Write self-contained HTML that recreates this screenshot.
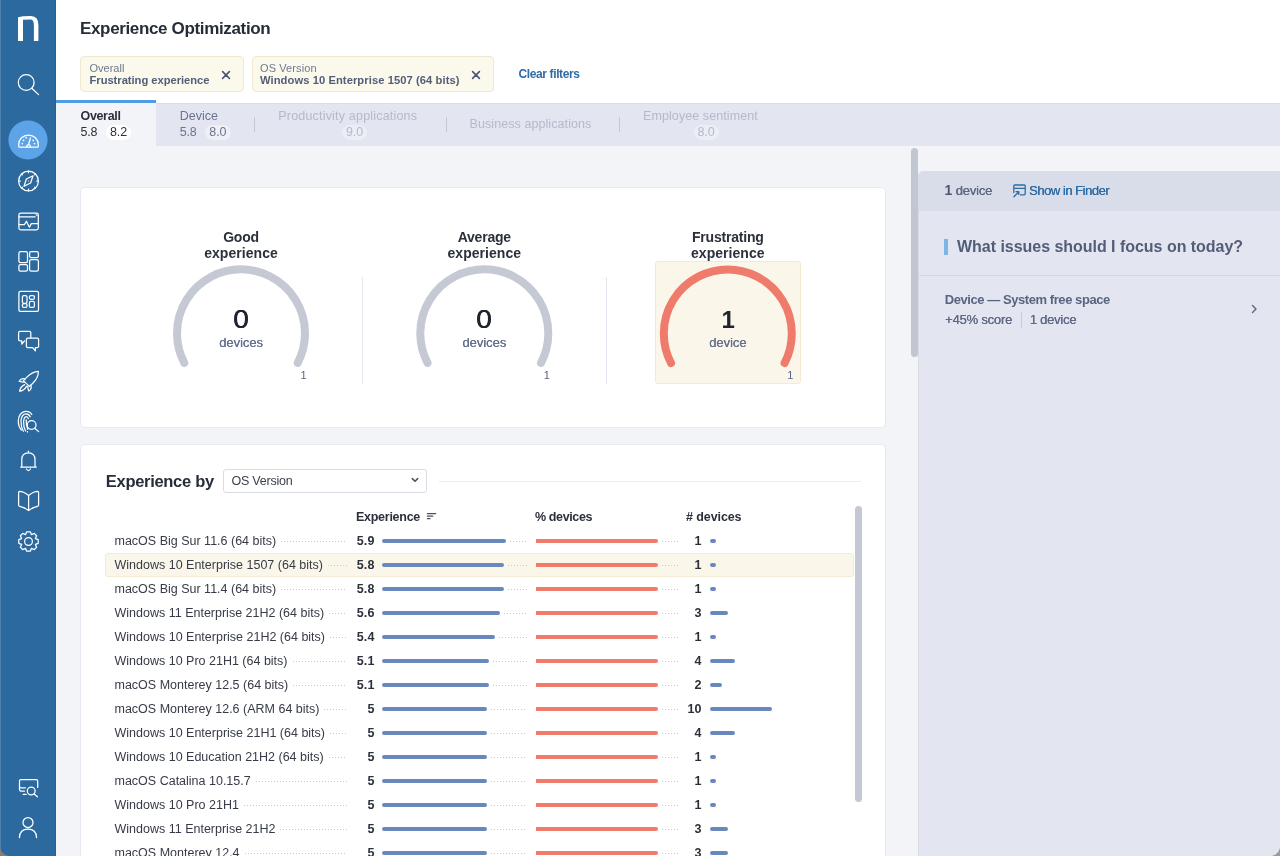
<!DOCTYPE html>
<html><head><meta charset="utf-8">
<style>
*{box-sizing:border-box;margin:0;padding:0}
html,body{width:1280px;height:856px;overflow:hidden}
body{will-change:transform;font-family:"Liberation Sans",sans-serif;background:#F3F4F8;position:relative;color:#2B303B}
.abs{position:absolute}
.t{position:absolute;line-height:1;white-space:nowrap}
#side{left:0;top:0;width:56px;height:856px;background:#2C699F}
#hdr{left:56px;top:0;width:1224px;height:103px;background:#fff}
.chip{position:absolute;top:56px;height:36px;background:#FBF8EC;border:1px solid #F2E8CF;border-radius:4px}
#tabs{left:56px;top:103px;width:1224px;height:43px;background:#E3E5F0;border-top:1px solid #D9DCE8}
#acttab{left:56px;top:100px;width:100px;height:46px;background:#F3F4F8;border-top:3px solid #4E9BE6}
.pill{position:absolute;height:15px;border-radius:8px}
.vsep{position:absolute;width:1px}
.card{position:absolute;background:#fff;border:1px solid #E7E9F2;border-radius:5px}
.bar{position:absolute;height:4px;border-radius:2px}
.dots{position:absolute;height:1px;background-image:linear-gradient(to right,#C5C8D2 1px,transparent 1px);background-size:3px 1px}
</style></head>
<body>
<div id="side" class="abs"><svg width="56" height="856" viewBox="0 0 56 856" style="position:absolute;left:0;top:0" fill="none" stroke="#fff" stroke-width="1.25" stroke-linecap="round" stroke-linejoin="round">
<path d="M18 17.2 L23 16.2 L31 16 Q38.4 16.2 38.4 25 L38.4 41 L33.9 41 L33.9 25.5 Q33.9 19.6 30.5 19.6 L23 19.8 L23 41 L18 41 Z" fill="#fff" stroke="none"/>
<circle cx="26.2" cy="82.5" r="7.9"/>
<path d="M31.8 88.2 L38.6 94.6"/>
<circle cx="28" cy="140" r="19.6" fill="#5CA3E8" stroke="none"/>
<path d="M19.6 147.2 L37.4 147.2 Q38.3 147.2 38.3 146.2 L38.3 144.6 A9.8 9.6 0 0 0 18.7 144.6 L18.7 146.2 Q18.7 147.2 19.6 147.2 Z"/>
<path d="M26.6 147 L27.2 144.8 L29.8 144.8 L30.4 147 M28.5 144.8 L30.4 138"/>
<g fill="#fff" stroke="none"><circle cx="22.3" cy="143.6" r="0.9"/><circle cx="23.6" cy="140.3" r="0.9"/><circle cx="26.2" cy="137.8" r="0.9"/><circle cx="33.2" cy="140.3" r="0.9"/><circle cx="34.5" cy="143.6" r="0.9"/></g>
<circle cx="28.5" cy="181" r="9.9"/>
<path d="M28.5 171.2 V172.8 M28.5 189.2 V190.8 M18.7 181 H20.3 M36.7 181 H38.3 M21.6 174.1 L22.4 174.9 M35.4 174.1 L34.6 174.9 M21.6 187.9 L22.4 187.1 M35.4 187.9 L34.6 187.1"/>
<path d="M24 186.2 L26.4 179 L33 175.8 L30.6 183 Z"/>
<circle cx="28.5" cy="181" r="0.6" fill="#fff" stroke="none"/>
<rect x="18.9" y="213" width="19.4" height="16.8" rx="1.8"/>
<path d="M18.9 216.8 H35.2 M19 224.6 H24.4 L26.4 221.2 L29.4 227.2 L31.3 223.6 H38.2"/>
<path d="M36 214.6 L37.2 215.6" stroke-width="1.1"/>
<rect x="18.9" y="251.6" width="8.6" height="11" rx="1.6"/>
<rect x="18.9" y="264.6" width="8.6" height="6.4" rx="1.6"/>
<rect x="29.6" y="251.6" width="8.8" height="6" rx="1.6"/>
<rect x="29.6" y="259.6" width="8.8" height="11.4" rx="1.6"/>
<rect x="18.9" y="291.3" width="19.6" height="20" rx="1.4"/>
<rect x="22.4" y="295.5" width="4.6" height="7.8" rx="1.5"/>
<rect x="22.4" y="303.6" width="4.6" height="3.8" rx="1.5"/>
<rect x="29.4" y="295.5" width="5" height="3.8" rx="1.5"/>
<rect x="29.4" y="301.4" width="5" height="6" rx="1.5"/>
<path d="M30.8 337.8 V332.8 Q30.8 331.4 29.4 331.4 H20 Q18.6 331.4 18.6 332.8 V339.4 Q18.6 340.8 20 340.8 H21.8 L21.8 344.2 L24.6 340.8"/>
<path d="M27.8 338 H37.2 Q38.6 338 38.6 339.4 V346.2 Q38.6 347.6 37.2 347.6 H35.4 V350.9 L32.6 347.6 H27.8 Q26.4 347.6 26.4 346.2 V339.4 Q26.4 338 27.8 338 Z"/>
<path d="M38.4 371.4 Q31.8 371.8 26.6 377.4 L23.4 380.6 L26.4 383.6 L29.6 386.4 L32.8 383.2 Q38.2 378 38.4 371.4 Z"/>
<path d="M25.2 379 Q21.2 377.6 19.2 381.2 Q21.6 382.2 24 382.2 M30.8 385 Q32.2 389 28.8 391 Q27.8 388.6 27.8 386.2 M24.6 384.6 Q20 387 19.6 391.2 Q24 390.8 26.6 386.4"/>
<path d="M21.4 430 Q18.2 426.4 18.3 421 Q18.7 412.4 25.4 411.3 Q29.8 411 31.8 414.4 M23.4 431.2 Q20.9 427 21 421.4 Q21.3 414.4 25.8 413.9 Q28.9 413.8 30.2 416.8 M25.6 431 Q23.4 427 23.6 422 Q23.9 416.8 26.2 416.6 Q27.9 416.6 28.3 418.6 M26.2 419.8 Q26 424.6 27.8 429.4 M27.4 431.6 L27.6 432"/>
<circle cx="31.6" cy="425" r="4.4"/>
<path d="M34.8 428.2 L38.6 431.6"/>
<path d="M28.4 451 V452.8 M21.8 466.6 V459.8 Q21.8 452.8 28.4 452.8 Q35 452.8 35 459.8 V466.6 M20.6 467 H36.4 M26.4 469 Q28.4 472 30.4 469"/>
<path d="M28.6 495.4 Q23.8 491.6 19.6 491.4 Q18.6 491.4 18.6 492.6 V505 Q18.6 506.2 19.8 506.4 Q24.6 507.4 28.6 510.6 Q32.6 507.4 37.4 506.4 Q38.6 506.2 38.6 505 V492.6 Q38.6 491.4 37.6 491.4 Q33.4 491.6 28.6 495.4 Z M28.6 495.4 V510.4"/>
<circle cx="28.5" cy="541.5" r="3.9"/>
<path d="M26.7 531.8 L30.3 531.8 L31.4 534.6 L34.3 533.4 L36.6 535.7 L35.4 538.6 L38.2 539.7 L38.2 543.3 L35.4 544.4 L36.6 547.3 L34.3 549.6 L31.4 548.4 L30.3 551.2 L26.7 551.2 L25.6 548.4 L22.7 549.6 L20.4 547.3 L21.6 544.4 L18.8 543.3 L18.8 539.7 L21.6 538.6 L20.4 535.7 L22.7 533.4 L25.6 534.6 Z"/>
<path d="M22.8 787.8 H21 Q19.5 787.8 19.5 786.2 V781 Q19.5 779.5 21 779.5 H36.2 Q37.7 779.5 37.7 781 V787.4 M19.5 786.4 V789.6 Q19.5 791.2 21 791.2 H24.4 M21.8 787.8 H25.4 M23.2 794.3 H26.2"/>
<circle cx="31.2" cy="791" r="3.9"/>
<path d="M34 793.8 L37.4 796.8"/>
<circle cx="28" cy="822.5" r="5"/>
<path d="M19.4 837.6 Q19.8 829.2 28 829.2 Q36.2 829.2 36.6 837.6"/>
</svg></div>
<div id="hdr" class="abs"></div>
<div class="abs" style="left:55px;top:0;width:1px;height:856px;background:#22609A"></div>
<div class="abs" style="left:0;top:0;width:1px;height:856px;background:#4A7FAE"></div>
<div class="t" style="top:19.91px;font-size:17px;font-weight:700;color:#262C38;letter-spacing:-0.35px;left:80px;">Experience Optimization</div>

<div class="chip" style="left:80px;width:164px"></div>
<div class="chip" style="left:252px;width:242px"></div>
<div class="t" style="top:62.89px;font-size:11px;font-weight:400;color:#6F7890;left:89.5px;">Overall</div>

<div class="t" style="top:74.72px;font-size:11.2px;font-weight:700;color:#535D78;letter-spacing:-0.03px;left:89.5px;">Frustrating experience</div>

<div class="t" style="top:62.89px;font-size:11px;font-weight:400;color:#6F7890;letter-spacing:0.1px;left:260px;">OS Version</div>

<div class="t" style="top:74.72px;font-size:11.2px;font-weight:700;color:#535D78;letter-spacing:0.07px;left:260px;">Windows 10 Enterprise 1507 (64 bits)</div>

<svg class="abs" style="left:221px;top:70px" width="10" height="10" viewBox="0 0 10 10"><path d="M1.6 1.6 L8.4 8.4 M8.4 1.6 L1.6 8.4" stroke="#4C5674" stroke-width="1.6" stroke-linecap="round"/></svg>
<svg class="abs" style="left:471px;top:70px" width="10" height="10" viewBox="0 0 10 10"><path d="M1.6 1.6 L8.4 8.4 M8.4 1.6 L1.6 8.4" stroke="#4C5674" stroke-width="1.6" stroke-linecap="round"/></svg>
<div class="t" style="top:67.94px;font-size:12px;font-weight:700;color:#2F6CA4;letter-spacing:-0.38px;left:518.5px;">Clear filters</div>

<div id="tabs" class="abs"></div>
<div id="acttab" class="abs"></div>
<div class="t" style="top:110.42px;font-size:12.5px;font-weight:700;color:#2B303B;letter-spacing:-0.34px;left:80.5px;">Overall</div>

<div class="t" style="top:126.22px;font-size:12.5px;font-weight:400;color:#2B303B;letter-spacing:-0.2px;left:80.5px;">5.8</div>

<div class="pill" style="left:106px;top:124.5px;width:25px;background:#fff"></div>
<div class="t" style="top:126.22px;font-size:12.5px;font-weight:400;color:#2B303B;letter-spacing:-0.15px;left:-181.5px;width:600px;text-align:center;">8.2</div>

<div class="t" style="top:110.42px;font-size:12.5px;font-weight:400;color:#6B7493;left:179.7px;">Device</div>

<div class="t" style="top:126.22px;font-size:12.5px;font-weight:400;color:#6B7493;letter-spacing:-0.2px;left:179.7px;">5.8</div>

<div class="pill" style="left:205px;top:124.5px;width:25.5px;background:#EFF0F6"></div>
<div class="t" style="top:126.22px;font-size:12.5px;font-weight:400;color:#6B7493;letter-spacing:-0.15px;left:-82.19999999999999px;width:600px;text-align:center;">8.0</div>

<div class="vsep" style="left:254px;top:117px;height:15px;background:#C5C8D6"></div>
<div class="t" style="top:110.42px;font-size:12.5px;font-weight:400;color:#B5B9CA;letter-spacing:0.19px;left:278.3px;">Productivity applications</div>

<div class="pill" style="left:342px;top:124.5px;width:25px;background:#ECEEF5"></div>
<div class="t" style="top:126.22px;font-size:12.5px;font-weight:400;color:#B5B9CA;letter-spacing:-0.15px;left:54.5px;width:600px;text-align:center;">9.0</div>

<div class="vsep" style="left:446px;top:117px;height:15px;background:#C5C8D6"></div>
<div class="t" style="top:118.17px;font-size:12.5px;font-weight:400;color:#B5B9CA;letter-spacing:0.08px;left:469.5px;">Business applications</div>

<div class="vsep" style="left:619px;top:117px;height:15px;background:#C5C8D6"></div>
<div class="t" style="top:110.17px;font-size:12.5px;font-weight:400;color:#B5B9CA;letter-spacing:0.09px;left:643px;">Employee sentiment</div>

<div class="pill" style="left:693.5px;top:125px;width:25px;background:#ECEEF5"></div>
<div class="t" style="top:126.22px;font-size:12.5px;font-weight:400;color:#B5B9CA;letter-spacing:-0.15px;left:406px;width:600px;text-align:center;">8.0</div>

<div class="card" style="left:80px;top:187px;width:806px;height:241px"></div>
<div class="vsep" style="left:362px;top:277px;height:107px;background:#E4E6EF"></div>
<div class="vsep" style="left:605.5px;top:277px;height:107px;background:#E4E6EF"></div>
<div class="abs" style="left:655px;top:261px;width:146px;height:123px;background:#FAF7EA;border:1px solid #F3EAD2;border-radius:3px"></div>
<svg class="abs" style="left:0;top:0" width="1280" height="856"><path d="M184.23 362.85 A64 64 0 1 1 297.77 362.85" stroke="#C5C9D4" stroke-width="8" fill="none" stroke-linecap="round"/><path d="M427.53 362.85 A64 64 0 1 1 541.07 362.85" stroke="#C5C9D4" stroke-width="8" fill="none" stroke-linecap="round"/><path d="M671.03 363.05 A64 64 0 1 1 784.57 363.05" stroke="#EF7B6C" stroke-width="8" fill="none" stroke-linecap="round"/></svg>
<div class="t" style="top:229.95px;font-size:14px;font-weight:700;color:#2B303B;letter-spacing:-0.2px;left:-59px;width:600px;text-align:center;">Good</div>

<div class="t" style="top:245.55px;font-size:14px;font-weight:700;color:#2B303B;letter-spacing:0.05px;left:-59px;width:600px;text-align:center;">experience</div>

<div class="t" style="top:307.14px;font-size:25px;font-weight:400;color:#1F2430;left:-59px;width:600px;text-align:center;transform:scaleX(1.12);text-shadow:0.25px 0 0 #1F2430,-0.25px 0 0 #1F2430">0</div>

<div class="t" style="top:336.30px;font-size:13px;font-weight:400;color:#66708F;letter-spacing:-0.05px;left:-59px;width:600px;text-align:center;text-shadow:0.2px 0 0 #66708F">devices</div>

<div class="t" style="top:370.49px;font-size:11px;font-weight:400;color:#5A6480;left:3.5px;width:600px;text-align:center;">1</div>

<div class="t" style="top:229.95px;font-size:14px;font-weight:700;color:#2B303B;letter-spacing:-0.2px;left:184.3px;width:600px;text-align:center;">Average</div>

<div class="t" style="top:245.55px;font-size:14px;font-weight:700;color:#2B303B;letter-spacing:0.05px;left:184.3px;width:600px;text-align:center;">experience</div>

<div class="t" style="top:307.14px;font-size:25px;font-weight:400;color:#1F2430;left:184.3px;width:600px;text-align:center;transform:scaleX(1.12);text-shadow:0.25px 0 0 #1F2430,-0.25px 0 0 #1F2430">0</div>

<div class="t" style="top:336.30px;font-size:13px;font-weight:400;color:#66708F;letter-spacing:-0.05px;left:184.3px;width:600px;text-align:center;text-shadow:0.2px 0 0 #66708F">devices</div>

<div class="t" style="top:370.49px;font-size:11px;font-weight:400;color:#5A6480;left:246.79999999999995px;width:600px;text-align:center;">1</div>

<div class="t" style="top:229.95px;font-size:14px;font-weight:700;color:#2B303B;letter-spacing:-0.2px;left:427.79999999999995px;width:600px;text-align:center;">Frustrating</div>

<div class="t" style="top:245.55px;font-size:14px;font-weight:700;color:#2B303B;letter-spacing:0.05px;left:427.79999999999995px;width:600px;text-align:center;">experience</div>

<div class="t" style="top:307.98px;font-size:24px;font-weight:700;color:#1F2430;left:428.29999999999995px;width:600px;text-align:center;">1</div>

<div class="t" style="top:336.30px;font-size:13px;font-weight:400;color:#66708F;letter-spacing:-0.05px;left:427.79999999999995px;width:600px;text-align:center;text-shadow:0.2px 0 0 #66708F">device</div>

<div class="t" style="top:370.49px;font-size:11px;font-weight:400;color:#5A6480;left:490.29999999999995px;width:600px;text-align:center;">1</div>

<div class="card" style="left:80px;top:444px;width:806px;height:430px"></div>
<div class="t" style="top:472.73px;font-size:16.5px;font-weight:700;color:#262C38;letter-spacing:-0.3px;left:105.8px;">Experience by</div>

<div class="abs" style="left:223px;top:469px;width:204px;height:24px;border:1px solid #D9DCE6;border-radius:3px;background:#fff"></div>
<div class="t" style="top:474.82px;font-size:12.5px;font-weight:400;color:#3C414D;letter-spacing:-0.22px;left:231.5px;">OS Version</div>

<svg class="abs" style="left:410px;top:476px" width="10" height="8" viewBox="0 0 10 8"><path d="M2.3 2.6 L5 5.3 L7.7 2.6" stroke="#4A4F5E" stroke-width="1.5" fill="none" stroke-linecap="round" stroke-linejoin="round"/></svg>
<div class="abs" style="left:439px;top:480.5px;width:422px;height:1px;background:#ECEDF3"></div>
<div class="abs" style="left:855px;top:506px;width:7px;height:296px;border-radius:4px;background:#C4C8D2"></div>
<div class="t" style="top:510.72px;font-size:12.5px;font-weight:700;color:#2B303B;letter-spacing:-0.27px;left:356px;">Experience</div>

<svg class="abs" style="left:425px;top:511px" width="14" height="10" viewBox="0 0 14 10"><path d="M2.4 2.7 H10.6 M2.4 5.2 H7.8 M2.4 7.7 H5" stroke="#4A505E" stroke-width="1.25" stroke-linecap="round"/></svg>
<div class="t" style="top:510.72px;font-size:12.5px;font-weight:700;color:#2B303B;letter-spacing:-0.38px;left:535px;">% devices</div>

<div class="t" style="top:510.72px;font-size:12.5px;font-weight:700;color:#2B303B;letter-spacing:-0.09px;left:686px;"># devices</div>

<div class="abs" style="left:105px;top:553px;width:749px;height:24px;background:#FAF7EA;border:1px solid #F3EBD3;border-radius:3px"></div>
<div class="t" style="left:114.5px;top:535.42px;width:232px;font-size:12.5px;color:#363B47;display:flex"><span>macOS Big Sur 11.6 (64 bits)</span><div class="dots" style="position:static;flex:1;margin-left:5px;margin-top:5.58px"></div></div>
<div class="t" style="top:535.42px;font-size:12.5px;font-weight:700;color:#2B303B;letter-spacing:0.1px;right:905.5px;">5.9</div>

<div class="bar" style="left:382px;top:539px;width:123.9px;background:#6988BE"></div>
<div class="dots" style="left:510px;top:541px;width:17px"></div>
<div class="bar" style="left:536px;top:539px;width:122px;background:#F07B6B;border-radius:0 2px 2px 0"></div>
<div class="dots" style="left:662px;top:541px;width:17px"></div>
<div class="t" style="top:535.42px;font-size:12.5px;font-weight:700;color:#2B303B;right:578.5px;">1</div>

<div class="bar" style="left:709.5px;top:539px;width:6.2px;background:#6988BE"></div>
<div class="t" style="left:114.5px;top:559.42px;width:232px;font-size:12.5px;color:#363B47;display:flex"><span>Windows 10 Enterprise 1507 (64 bits)</span><div class="dots" style="position:static;flex:1;margin-left:5px;margin-top:5.58px"></div></div>
<div class="t" style="top:559.42px;font-size:12.5px;font-weight:700;color:#2B303B;letter-spacing:0.1px;right:905.5px;">5.8</div>

<div class="bar" style="left:382px;top:563px;width:121.8px;background:#6988BE"></div>
<div class="dots" style="left:508px;top:565px;width:19px"></div>
<div class="bar" style="left:536px;top:563px;width:122px;background:#F07B6B;border-radius:0 2px 2px 0"></div>
<div class="dots" style="left:662px;top:565px;width:17px"></div>
<div class="t" style="top:559.42px;font-size:12.5px;font-weight:700;color:#2B303B;right:578.5px;">1</div>

<div class="bar" style="left:709.5px;top:563px;width:6.2px;background:#6988BE"></div>
<div class="t" style="left:114.5px;top:583.42px;width:232px;font-size:12.5px;color:#363B47;display:flex"><span>macOS Big Sur 11.4 (64 bits)</span><div class="dots" style="position:static;flex:1;margin-left:5px;margin-top:5.58px"></div></div>
<div class="t" style="top:583.42px;font-size:12.5px;font-weight:700;color:#2B303B;letter-spacing:0.1px;right:905.5px;">5.8</div>

<div class="bar" style="left:382px;top:587px;width:121.8px;background:#6988BE"></div>
<div class="dots" style="left:508px;top:589px;width:19px"></div>
<div class="bar" style="left:536px;top:587px;width:122px;background:#F07B6B;border-radius:0 2px 2px 0"></div>
<div class="dots" style="left:662px;top:589px;width:17px"></div>
<div class="t" style="top:583.42px;font-size:12.5px;font-weight:700;color:#2B303B;right:578.5px;">1</div>

<div class="bar" style="left:709.5px;top:587px;width:6.2px;background:#6988BE"></div>
<div class="t" style="left:114.5px;top:607.42px;width:232px;font-size:12.5px;color:#363B47;display:flex"><span>Windows 11 Enterprise 21H2 (64 bits)</span><div class="dots" style="position:static;flex:1;margin-left:5px;margin-top:5.58px"></div></div>
<div class="t" style="top:607.42px;font-size:12.5px;font-weight:700;color:#2B303B;letter-spacing:0.1px;right:905.5px;">5.6</div>

<div class="bar" style="left:382px;top:611px;width:117.6px;background:#6988BE"></div>
<div class="dots" style="left:504px;top:613px;width:23px"></div>
<div class="bar" style="left:536px;top:611px;width:122px;background:#F07B6B;border-radius:0 2px 2px 0"></div>
<div class="dots" style="left:662px;top:613px;width:17px"></div>
<div class="t" style="top:607.42px;font-size:12.5px;font-weight:700;color:#2B303B;right:578.5px;">3</div>

<div class="bar" style="left:709.5px;top:611px;width:18.8px;background:#6988BE"></div>
<div class="t" style="left:114.5px;top:631.42px;width:232px;font-size:12.5px;color:#363B47;display:flex"><span>Windows 10 Enterprise 21H2 (64 bits)</span><div class="dots" style="position:static;flex:1;margin-left:5px;margin-top:5.58px"></div></div>
<div class="t" style="top:631.42px;font-size:12.5px;font-weight:700;color:#2B303B;letter-spacing:0.1px;right:905.5px;">5.4</div>

<div class="bar" style="left:382px;top:635px;width:113.4px;background:#6988BE"></div>
<div class="dots" style="left:499px;top:637px;width:28px"></div>
<div class="bar" style="left:536px;top:635px;width:122px;background:#F07B6B;border-radius:0 2px 2px 0"></div>
<div class="dots" style="left:662px;top:637px;width:17px"></div>
<div class="t" style="top:631.42px;font-size:12.5px;font-weight:700;color:#2B303B;right:578.5px;">1</div>

<div class="bar" style="left:709.5px;top:635px;width:6.2px;background:#6988BE"></div>
<div class="t" style="left:114.5px;top:655.42px;width:232px;font-size:12.5px;color:#363B47;display:flex"><span>Windows 10 Pro 21H1 (64 bits)</span><div class="dots" style="position:static;flex:1;margin-left:5px;margin-top:5.58px"></div></div>
<div class="t" style="top:655.42px;font-size:12.5px;font-weight:700;color:#2B303B;letter-spacing:0.1px;right:905.5px;">5.1</div>

<div class="bar" style="left:382px;top:659px;width:107.1px;background:#6988BE"></div>
<div class="dots" style="left:493px;top:661px;width:34px"></div>
<div class="bar" style="left:536px;top:659px;width:122px;background:#F07B6B;border-radius:0 2px 2px 0"></div>
<div class="dots" style="left:662px;top:661px;width:17px"></div>
<div class="t" style="top:655.42px;font-size:12.5px;font-weight:700;color:#2B303B;right:578.5px;">4</div>

<div class="bar" style="left:709.5px;top:659px;width:25.0px;background:#6988BE"></div>
<div class="t" style="left:114.5px;top:679.42px;width:232px;font-size:12.5px;color:#363B47;display:flex"><span>macOS Monterey 12.5 (64 bits)</span><div class="dots" style="position:static;flex:1;margin-left:5px;margin-top:5.58px"></div></div>
<div class="t" style="top:679.42px;font-size:12.5px;font-weight:700;color:#2B303B;letter-spacing:0.1px;right:905.5px;">5.1</div>

<div class="bar" style="left:382px;top:683px;width:107.1px;background:#6988BE"></div>
<div class="dots" style="left:493px;top:685px;width:34px"></div>
<div class="bar" style="left:536px;top:683px;width:122px;background:#F07B6B;border-radius:0 2px 2px 0"></div>
<div class="dots" style="left:662px;top:685px;width:17px"></div>
<div class="t" style="top:679.42px;font-size:12.5px;font-weight:700;color:#2B303B;right:578.5px;">2</div>

<div class="bar" style="left:709.5px;top:683px;width:12.5px;background:#6988BE"></div>
<div class="t" style="left:114.5px;top:703.42px;width:232px;font-size:12.5px;color:#363B47;display:flex"><span>macOS Monterey 12.6 (ARM 64 bits)</span><div class="dots" style="position:static;flex:1;margin-left:5px;margin-top:5.58px"></div></div>
<div class="t" style="top:703.42px;font-size:12.5px;font-weight:700;color:#2B303B;letter-spacing:0.1px;right:905.5px;">5</div>

<div class="bar" style="left:382px;top:707px;width:105.0px;background:#6988BE"></div>
<div class="dots" style="left:491px;top:709px;width:36px"></div>
<div class="bar" style="left:536px;top:707px;width:122px;background:#F07B6B;border-radius:0 2px 2px 0"></div>
<div class="dots" style="left:662px;top:709px;width:17px"></div>
<div class="t" style="top:703.42px;font-size:12.5px;font-weight:700;color:#2B303B;right:578.5px;">10</div>

<div class="bar" style="left:709.5px;top:707px;width:62.5px;background:#6988BE"></div>
<div class="t" style="left:114.5px;top:727.42px;width:232px;font-size:12.5px;color:#363B47;display:flex"><span>Windows 10 Enterprise 21H1 (64 bits)</span><div class="dots" style="position:static;flex:1;margin-left:5px;margin-top:5.58px"></div></div>
<div class="t" style="top:727.42px;font-size:12.5px;font-weight:700;color:#2B303B;letter-spacing:0.1px;right:905.5px;">5</div>

<div class="bar" style="left:382px;top:731px;width:105.0px;background:#6988BE"></div>
<div class="dots" style="left:491px;top:733px;width:36px"></div>
<div class="bar" style="left:536px;top:731px;width:122px;background:#F07B6B;border-radius:0 2px 2px 0"></div>
<div class="dots" style="left:662px;top:733px;width:17px"></div>
<div class="t" style="top:727.42px;font-size:12.5px;font-weight:700;color:#2B303B;right:578.5px;">4</div>

<div class="bar" style="left:709.5px;top:731px;width:25.0px;background:#6988BE"></div>
<div class="t" style="left:114.5px;top:751.42px;width:232px;font-size:12.5px;color:#363B47;display:flex"><span>Windows 10 Education 21H2 (64 bits)</span><div class="dots" style="position:static;flex:1;margin-left:5px;margin-top:5.58px"></div></div>
<div class="t" style="top:751.42px;font-size:12.5px;font-weight:700;color:#2B303B;letter-spacing:0.1px;right:905.5px;">5</div>

<div class="bar" style="left:382px;top:755px;width:105.0px;background:#6988BE"></div>
<div class="dots" style="left:491px;top:757px;width:36px"></div>
<div class="bar" style="left:536px;top:755px;width:122px;background:#F07B6B;border-radius:0 2px 2px 0"></div>
<div class="dots" style="left:662px;top:757px;width:17px"></div>
<div class="t" style="top:751.42px;font-size:12.5px;font-weight:700;color:#2B303B;right:578.5px;">1</div>

<div class="bar" style="left:709.5px;top:755px;width:6.2px;background:#6988BE"></div>
<div class="t" style="left:114.5px;top:775.42px;width:232px;font-size:12.5px;color:#363B47;display:flex"><span>macOS Catalina 10.15.7</span><div class="dots" style="position:static;flex:1;margin-left:5px;margin-top:5.58px"></div></div>
<div class="t" style="top:775.42px;font-size:12.5px;font-weight:700;color:#2B303B;letter-spacing:0.1px;right:905.5px;">5</div>

<div class="bar" style="left:382px;top:779px;width:105.0px;background:#6988BE"></div>
<div class="dots" style="left:491px;top:781px;width:36px"></div>
<div class="bar" style="left:536px;top:779px;width:122px;background:#F07B6B;border-radius:0 2px 2px 0"></div>
<div class="dots" style="left:662px;top:781px;width:17px"></div>
<div class="t" style="top:775.42px;font-size:12.5px;font-weight:700;color:#2B303B;right:578.5px;">1</div>

<div class="bar" style="left:709.5px;top:779px;width:6.2px;background:#6988BE"></div>
<div class="t" style="left:114.5px;top:799.42px;width:232px;font-size:12.5px;color:#363B47;display:flex"><span>Windows 10 Pro 21H1</span><div class="dots" style="position:static;flex:1;margin-left:5px;margin-top:5.58px"></div></div>
<div class="t" style="top:799.42px;font-size:12.5px;font-weight:700;color:#2B303B;letter-spacing:0.1px;right:905.5px;">5</div>

<div class="bar" style="left:382px;top:803px;width:105.0px;background:#6988BE"></div>
<div class="dots" style="left:491px;top:805px;width:36px"></div>
<div class="bar" style="left:536px;top:803px;width:122px;background:#F07B6B;border-radius:0 2px 2px 0"></div>
<div class="dots" style="left:662px;top:805px;width:17px"></div>
<div class="t" style="top:799.42px;font-size:12.5px;font-weight:700;color:#2B303B;right:578.5px;">1</div>

<div class="bar" style="left:709.5px;top:803px;width:6.2px;background:#6988BE"></div>
<div class="t" style="left:114.5px;top:823.42px;width:232px;font-size:12.5px;color:#363B47;display:flex"><span>Windows 11 Enterprise 21H2</span><div class="dots" style="position:static;flex:1;margin-left:5px;margin-top:5.58px"></div></div>
<div class="t" style="top:823.42px;font-size:12.5px;font-weight:700;color:#2B303B;letter-spacing:0.1px;right:905.5px;">5</div>

<div class="bar" style="left:382px;top:827px;width:105.0px;background:#6988BE"></div>
<div class="dots" style="left:491px;top:829px;width:36px"></div>
<div class="bar" style="left:536px;top:827px;width:122px;background:#F07B6B;border-radius:0 2px 2px 0"></div>
<div class="dots" style="left:662px;top:829px;width:17px"></div>
<div class="t" style="top:823.42px;font-size:12.5px;font-weight:700;color:#2B303B;right:578.5px;">3</div>

<div class="bar" style="left:709.5px;top:827px;width:18.8px;background:#6988BE"></div>
<div class="t" style="left:114.5px;top:847.42px;width:232px;font-size:12.5px;color:#363B47;display:flex"><span>macOS Monterey 12.4</span><div class="dots" style="position:static;flex:1;margin-left:5px;margin-top:5.58px"></div></div>
<div class="t" style="top:847.42px;font-size:12.5px;font-weight:700;color:#2B303B;letter-spacing:0.1px;right:905.5px;">5</div>

<div class="bar" style="left:382px;top:851px;width:105.0px;background:#6988BE"></div>
<div class="dots" style="left:491px;top:853px;width:36px"></div>
<div class="bar" style="left:536px;top:851px;width:122px;background:#F07B6B;border-radius:0 2px 2px 0"></div>
<div class="dots" style="left:662px;top:853px;width:17px"></div>
<div class="t" style="top:847.42px;font-size:12.5px;font-weight:700;color:#2B303B;right:578.5px;">3</div>

<div class="bar" style="left:709.5px;top:851px;width:18.8px;background:#6988BE"></div>
<div class="abs" style="left:911px;top:148px;width:7px;height:209px;border-radius:4px;background:#C2C6D1"></div>
<div class="abs" style="left:919px;top:171px;width:361px;height:685px;background:#E3E6F0;border-top-left-radius:5px;box-shadow:-1px 0 0 #D8DBE6"></div>
<div class="abs" style="left:919px;top:171px;width:361px;height:40px;background:#D9DCE9;border-top-left-radius:5px"></div>
<div class="t" style="top:183.15px;font-size:14px;font-weight:700;color:#4F5874;left:944.5px;">1</div>

<div class="t" style="top:184.00px;font-size:13px;font-weight:400;color:#5F6985;letter-spacing:-0.2px;left:955.6px;text-shadow:0.3px 0 0 #5F6985">device</div>

<svg class="abs" style="left:1010px;top:182px" width="18" height="18" viewBox="1010 182 18 18"><path d="M1013.8 192.6 V186 Q1013.8 185 1014.8 185 H1024.2 Q1025.2 185 1025.2 186 V193.8 Q1025.2 194.8 1024.2 194.8 H1020.4 M1013.8 188.4 H1025.2 M1013.9 196.8 L1018.6 192 M1016 191.6 H1018.8 V194.4" stroke="#2F6CA4" stroke-width="1.3" fill="none" stroke-linecap="round" stroke-linejoin="round"/></svg>
<div class="t" style="top:184.00px;font-size:13px;font-weight:400;color:#2F6CA4;letter-spacing:-0.47px;left:1029px;text-shadow:0.25px 0 0 #2F6CA4">Show in Finder</div>

<div class="abs" style="left:944px;top:239px;width:4px;height:16px;background:#7DB5E4"></div>
<div class="t" style="top:238.96px;font-size:16px;font-weight:700;color:#535D78;letter-spacing:-0.03px;left:957px;">What issues should I focus on today?</div>

<div class="abs" style="left:919px;top:275px;width:361px;height:1px;background:#D5D8E4"></div>
<div class="t" style="top:293.30px;font-size:13px;font-weight:700;color:#5A6480;letter-spacing:-0.43px;left:944.7px;">Device — System free space</div>

<div class="t" style="top:313.00px;font-size:13px;font-weight:400;color:#5F6985;letter-spacing:-0.2px;left:945px;text-shadow:0.3px 0 0 #5F6985">+45% score</div>

<div class="vsep" style="left:1021px;top:312px;height:16px;background:#C9CCD8"></div>
<div class="t" style="top:313.00px;font-size:13px;font-weight:400;color:#5F6985;letter-spacing:-0.24px;left:1029.7px;text-shadow:0.3px 0 0 #5F6985">1 device</div>

<svg class="abs" style="left:1248px;top:302px" width="12" height="14" viewBox="0 0 12 14"><path d="M4.5 3.5 L8 7 L4.5 10.5" stroke="#5A6480" stroke-width="1.4" fill="none" stroke-linecap="round" stroke-linejoin="round"/></svg>
<div class="abs" style="left:0;top:846px;width:10px;height:10px;background:radial-gradient(circle at 10px 0,rgba(0,0,0,0) 9.5px,#8C7C70 10.5px)"></div>
<div class="abs" style="left:1270px;top:846px;width:10px;height:10px;background:radial-gradient(circle at 0 0,rgba(0,0,0,0) 9.5px,#9A9A9C 10.5px)"></div>
</body></html>
